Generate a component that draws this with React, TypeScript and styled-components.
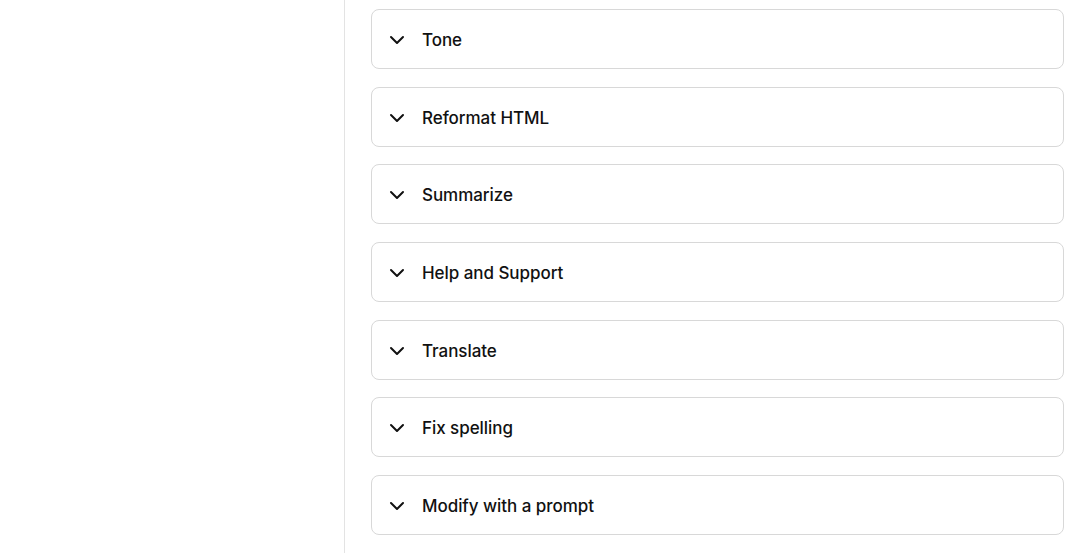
import styled, { createGlobalStyle } from 'styled-components';
import { ChevronDown } from 'lucide-react';

const GlobalStyle = createGlobalStyle`
  html, body {
    margin: 0;
    padding: 0;
    background: #ffffff;
    font-family: Inter, "Noto Sans", sans-serif;
    color: #111111;
  }
`;

const Page = styled.div`
  display: flex;
  width: 1090px;
  height: 553px;
  overflow: hidden;
`;

const Sidebar = styled.aside`
  width: 344px;
  flex-shrink: 0;
  border-right: 1.5px solid #e3e3e3;
`;

const Main = styled.main`
  flex: 1;
  display: flex;
  flex-direction: column;
  gap: 17.7px;
  padding: 9px 26px 0 26px;
`;

const Item = styled.div`
  display: flex;
  align-items: center;
  gap: 13px;
  height: 60px;
  box-sizing: border-box;
  padding: 2px 13px 0;
  border: 1px solid #d8d8d8;
  border-radius: 8px;
  background: #fff;
  cursor: pointer;
`;

const Label = styled.span`
  font-size: 17px;
  font-weight: 500;
  letter-spacing: -0.05px;
  color: #111;
`;

const items = [
  'Tone',
  'Reformat HTML',
  'Summarize',
  'Help and Support',
  'Translate',
  'Fix spelling',
  'Modify with a prompt',
];

export default function App() {
  return (
    <>
      <GlobalStyle />
      <Page>
        <Sidebar />
        <Main>
          {items.map((name) => (
            <Item key={name}>
              <ChevronDown size={24} strokeWidth={2} />
              <Label>{name}</Label>
            </Item>
          ))}
        </Main>
      </Page>
    </>
  );
}
